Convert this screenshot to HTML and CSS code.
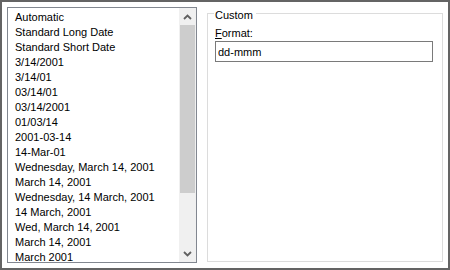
FILE: index.html
```html
<!DOCTYPE html>
<html lang="en">
<head>
    <meta charset="UTF-8">
    <meta name="viewport" content="width=device-width, initial-scale=1.0">
    <title>Format Cells - Custom</title>
    <link rel="stylesheet" href="styles.css">
</head>
<body>

    <div class="dialog">

        <!-- Format type list -->
        <div class="list-box">
            <ul class="list-items">
                <li>Automatic</li>
                <li>Standard Long Date</li>
                <li>Standard Short Date</li>
                <li>3/14/2001</li>
                <li>3/14/01</li>
                <li>03/14/01</li>
                <li>03/14/2001</li>
                <li>01/03/14</li>
                <li>2001-03-14</li>
                <li>14-Mar-01</li>
                <li>Wednesday, March 14, 2001</li>
                <li>March 14, 2001</li>
                <li>Wednesday, 14 March, 2001</li>
                <li>14 March, 2001</li>
                <li>Wed, March 14, 2001</li>
                <li>March 14, 2001</li>
                <li>March 2001</li>
            </ul>
            <div class="scrollbar">
                <div class="scroll-btn">
                    <svg width="9" height="6" viewBox="0 0 9 6"><polyline points="1,5 4.5,1.5 8,5" fill="none" stroke="#606060" stroke-width="1.8"/></svg>
                </div>
                <div class="scroll-track">
                    <div class="scroll-thumb"></div>
                </div>
                <div class="scroll-btn">
                    <svg width="9" height="6" viewBox="0 0 9 6"><polyline points="1,1 4.5,4.5 8,1" fill="none" stroke="#606060" stroke-width="1.8"/></svg>
                </div>
            </div>
        </div>

        <!-- Custom format group -->
        <fieldset class="custom-group">
            <legend>Custom</legend>
            <label class="format-label" for="format-input"><u>F</u>ormat:</label>
            <input type="text" id="format-input" class="format-input" value="dd-mmm">
        </fieldset>

    </div>

</body>
</html>
```

FILE: styles.css
```css
body {
    margin: 0;
    font-family: "Liberation Sans", Arial, sans-serif;
    font-size: 11px;
    color: #000;
}
.dialog {
    width: 450px;
    height: 270px;
    box-sizing: border-box;
    border: 2px solid #646464;
    padding: 5px;
    background-color: #fff;
    display: flex;
    gap: 10px;
}
/* List box with scrollbar */
.list-box {
    width: 190px;
    box-sizing: border-box;
    border: 1px solid #828790;
    display: flex;
    overflow: hidden;
}
.list-items {
    flex: 1;
    list-style: none;
    margin: 0;
    padding: 2px 0 0 7px;
    overflow: hidden;
}
.list-items li {
    line-height: 15px;
    height: 15px;
    white-space: nowrap;
}
.scrollbar {
    width: 17px;
    background-color: #f0f0f0;
    display: flex;
    flex-direction: column;
}
.scroll-btn {
    height: 17px;
    display: flex;
    align-items: center;
    justify-content: center;
}
.scroll-btn svg {
    display: block;
}
.scroll-track {
    flex: 1;
}
.scroll-thumb {
    height: 168px;
    margin: 0 1px;
    background-color: #cdcdcd;
}
/* Custom group box */
.custom-group {
    flex: 1;
    margin: -1px 0 1px 0;
    padding: 5px 7px 0 7px;
    border: 1px solid #dcdcdc;
    min-width: 0;
}
.custom-group legend {
    padding: 3px 3px 0 1px;
    margin-left: -1px;
    line-height: 12px;
}
.format-label {
    display: block;
    line-height: 15px;
}
.format-input {
    display: block;
    width: 218px;
    height: 21px;
    box-sizing: border-box;
    margin: 0;
    padding: 0 2px;
    border: 1px solid #7a7a7a;
    font-family: "Liberation Sans", Arial, sans-serif;
    font-size: 11px;
    color: #000;
    outline: none;
}
```
